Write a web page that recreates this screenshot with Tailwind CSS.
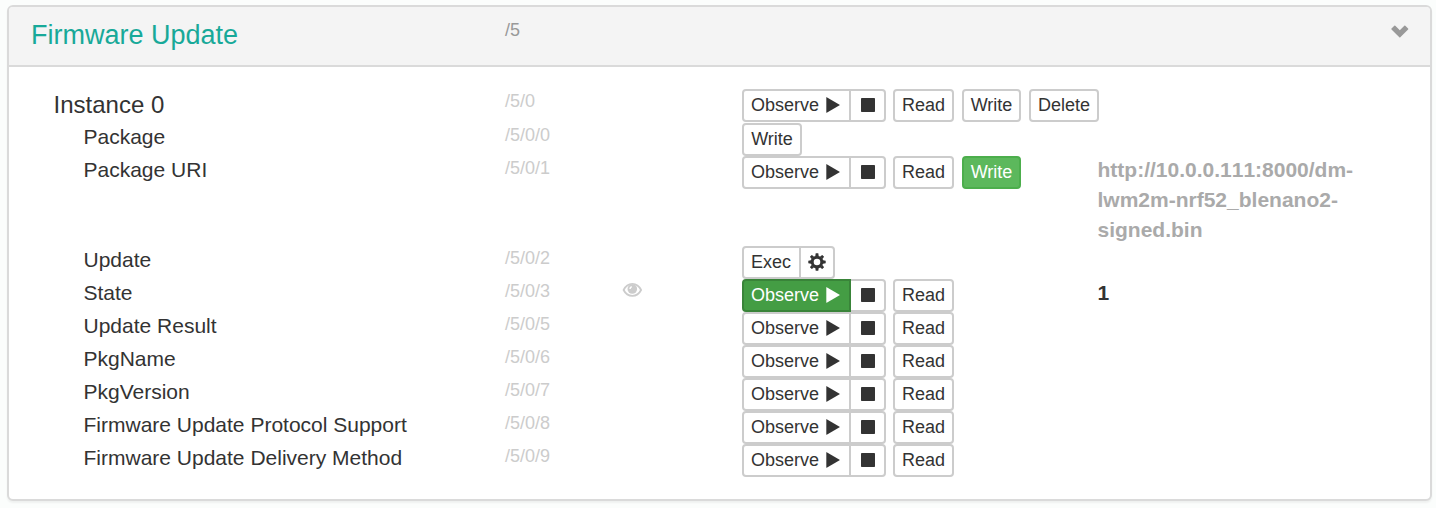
<!DOCTYPE html>
<html lang="en">
<head>
<meta charset="utf-8">
<title>Firmware Update</title>
<script src="https://cdn.jsdelivr.net/npm/@tailwindcss/browser@4"></script>
</head>
<body class="h-[508px] overflow-hidden bg-[#fbfdfc] pt-[5px] pl-[7px] text-[#333] font-['Liberation_Sans',Arial,sans-serif]">
<svg class="hidden">
  <symbol id="play" viewBox="0 0 14 16"><path fill="currentColor" d="M.3.4Q.3 0 .7.2L13.600 7.700Q13.900 8 13.600 8.300L.7 15.800Q.3 16 .3 15.600Z"/></symbol>
  <symbol id="stop" viewBox="0 0 14 14"><rect width="14" height="14" rx=".7" fill="currentColor"/></symbol>
</svg>
<main class="h-[496px] w-[1425px] rounded-[6px] border-2 border-[#dadada] bg-white shadow-[0_2px_2px_rgba(0,0,0,0.05)]">
  <header class="flex h-[60px] rounded-t-[4px] border-b-2 border-[#dadada] bg-[#f4f4f4] pl-[22px]">
    <h1 class="w-[474px] pt-[13px] text-[27px] leading-[30px] text-[#18a999]">Firmware Update</h1>
    <span class="pt-[8px] text-[18px] leading-[30px] text-[#999]">/5</span>
    <svg class="mt-[18px] mr-[21px] ml-auto h-[13px] w-[18px] text-[#999]" viewBox="0 0 18 13"><path fill="currentColor" d="M.5 3.500 3.300.8Q3.800.3 4.300.8L8.800 5.300 13.300.8Q13.800.3 14.300.8L17.100 3.500Q17.600 4 17.100 4.500L9.300 12.300Q8.800 12.800 8.300 12.300L.5 4.500Q0 4 .5 3.500Z"/></svg>
  </header>
  <div id="rows" class="pt-[22px]"></div>
</main>
<script>
  const base = 'flex h-[33px] shrink-0 items-center justify-center border-2 text-[18px] leading-[27px] pb-px';
  const plain = 'border-[#ccc] bg-white text-[#333]';
  const play = '<svg class="ml-[7px] h-[16px] w-[14px]"><use href="#play"/></svg>';
  const observe = (on) => `<button class="${base} w-[109px] pr-[2px] rounded-l-[4px] ${on ? 'relative z-10 border-[#398439] bg-[#449d44] text-white' : plain}">Observe${play}</button><button class="${base} ${plain} -ml-[2px] w-[37px] rounded-r-[4px]"><svg class="h-[14px] w-[14px]"><use href="#stop"/></svg></button>`;
  const read = `<button class="${base} ${plain} ml-[7px] w-[61px] rounded-[4px]">Read</button>`;
  const write = (cls) => `<button class="${base} ${cls} rounded-[4px]">Write</button>`;
  const gear = '<svg class="-mt-px mr-px h-[18px] w-[18px]" viewBox="-9 -9 18 18"><g fill="currentColor"><path fill-rule="evenodd" d="M0-6.300A6.300 6.300 0 1 1 0 6.300 6.300 6.300 0 1 1 0-6.300ZM0-3.300A3.300 3.300 0 1 0 0 3.300 3.300 3.300 0 1 0 0-3.300Z"/><path id="t" d="M-1.700-6-1.300-8.700H1.300L1.700-6ZM-1.700 6-1.300 8.700H1.300L1.700 6Z"/><use href="#t" transform="rotate(45)"/><use href="#t" transform="rotate(90)"/><use href="#t" transform="rotate(135)"/></g></svg>';
  const exec = `<button class="${base} ${plain} w-[59px] pr-px rounded-l-[4px]">Exec</button><button class="${base} ${plain} -ml-[2px] w-[36px] rounded-r-[4px]">${gear}</button>`;
  const del = `<button class="${base} ${plain} ml-[8px] w-[70px] rounded-[4px]">Delete</button>`;
  const eye = '<svg class="mt-[3px] h-[16px] w-[20px]" viewBox="0 0 20 16"><path d="M1.600 8C5.500-.2 15.200-.2 19.100 8C15.200 15.800 5.500 15.800 1.600 8Z" fill="none" stroke="#ccc" stroke-width="1.800"/><circle cx="10.300" cy="7" r="4.800" fill="#ccc"/><path d="M8 7Q8 5 9.800 4.700" stroke="#fff" stroke-width="1.500" fill="none"/></svg>';
  const or = observe(false) + read;
  const data = [
    ['Instance 0', '/5/0', or + write(plain + ' ml-[8px] w-[59px]') + del],
    ['Package', '/5/0/0', write(plain + ' w-[60px]')],
    ['Package URI', '/5/0/1', or + write('ml-[8px] w-[59px] border-[#4cae4c] bg-[#5cb85c] text-white'), 'http://10.0.0.111:8000/dm-<br>lwm2m-nrf52_blenano2-<br>signed.bin'],
    ['Update', '/5/0/2', exec],
    ['State', '/5/0/3', observe(true) + read, '1'],
    ['Update Result', '/5/0/5', or],
    ['PkgName', '/5/0/6', or],
    ['PkgVersion', '/5/0/7', or],
    ['Firmware Update Protocol Support', '/5/0/8', or],
    ['Firmware Update Delivery Method', '/5/0/9', or]
  ];
  document.getElementById('rows').innerHTML = data.map(([name, path, buttons, value = ''], i) => `
    <div class="flex items-start ${i === 0 ? 'h-[34px]' : i === 2 ? 'h-[90px]' : 'h-[33px]'}">
      <div class="${i === 0 ? 'w-[496px] pl-[44.500px] pt-px text-[24px]' : 'w-[496px] pl-[74.500px] -mt-px text-[21px]'} leading-[30px]">${name}</div>
      <div class="-mt-[3px] w-[117px] text-[18px] leading-[30px] text-[#ccc]">${path}</div>
      <div class="w-[120px]">${name === 'State' ? eye : ''}</div>
      <div class="flex w-[355.500px]">${buttons}</div>
      <div class="-mt-px text-[21px] leading-[30px] font-bold [font-kerning:none] ${i === 2 ? 'text-[#aaa]' : ''}">${value}</div>
    </div>`).join('');
</script>
</body>
</html>
